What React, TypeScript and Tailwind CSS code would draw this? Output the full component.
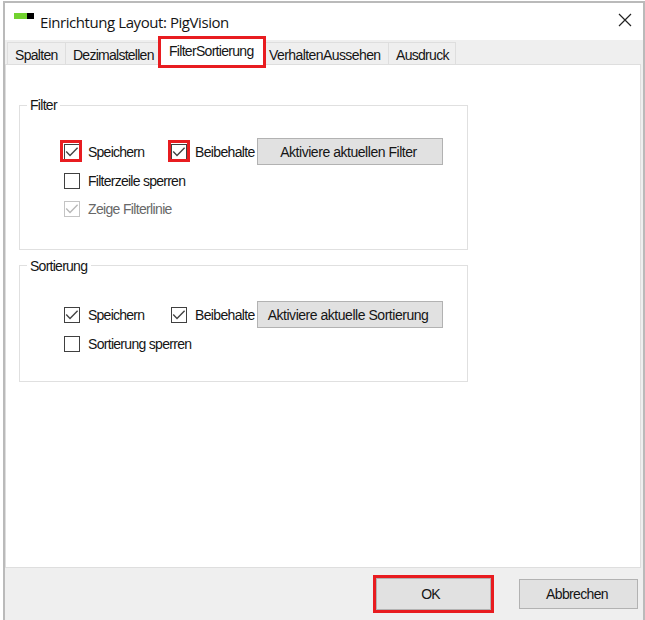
import type { ReactNode } from "react";

function Check({ checked = false, disabled = false, marked = false, markClass = "" }: { checked?: boolean; disabled?: boolean; marked?: boolean; markClass?: string }) {
  return (
    <span className={`relative block h-4 w-4 shrink-0 border ${disabled ? "border-[#c4c4c4] text-[#b8b8b8]" : "border-[#404040] text-[#444]"} bg-white`}>
      {checked && (
        <svg viewBox="0 0 14 14" className="h-[14px] w-[14px]" fill="none" stroke="currentColor" strokeWidth="1.4">
          <path d="M1.2 6.6 5 10.4 12.6 2.8" />
        </svg>
      )}
      {marked && <span className={`absolute h-[22px] w-[22px] border-[3px] border-[#e81c20] ${markClass}`} />}
    </span>
  );
}

function Button({ children, className }: { children: ReactNode; className: string }) {
  return <button className={`flex shrink-0 items-center justify-center border border-[#b2b2b2] bg-[#e1e1e1] ${className}`}>{children}</button>;
}

function Group({ title, titleClass, className, children }: { title: string; titleClass: string; className: string; children: ReactNode }) {
  return (
    <section className={`relative w-[449px] border border-[#e0e0e0] pl-11 ${className}`}>
      <h2 className={`absolute left-[7px] h-[17px] bg-white pl-[3px] leading-[17px] ${titleClass}`}>{title}</h2>
      {children}
    </section>
  );
}

export default function App() {
  return (
    <main className="h-[620px] w-[645px] overflow-hidden bg-white pt-px pl-[3px] font-['Liberation_Sans',Arial,sans-serif] text-[14px] leading-4 whitespace-nowrap text-[#151515]">
      <div className="flex h-[619px] w-[642px] flex-col border-t-2 border-r-2 border-l-2 border-[#bababa] bg-[#efefef]">
        <header className="flex h-[37px] shrink-0 items-center bg-white pl-[9px]">
          <span className="mb-[11px] flex h-[6px] w-5">
            <span className="w-[13px] bg-[#72d22f]" />
            <span className="w-[7px] bg-black" />
          </span>
          <span className="ml-[6px] font-['Open_Sans',sans-serif] text-[15px] tracking-[-0.43px]">Einrichtung Layout: PigVision</span>
          <svg viewBox="0 0 14 14" className="mr-[11px] mb-[3px] ml-auto h-[14px] w-[14px]" stroke="#222" strokeWidth="1.2">
            <path d="M1 1 13 13M13 1 1 13" />
          </svg>
        </header>
        <nav className="relative z-10 flex h-6 shrink-0 pt-[2px] pl-[2px]">
          <span className="w-[58px] border-t border-l border-[#dedede] pt-[4px] pl-[7px] tracking-[-0.7px]">Spalten</span>
          <span className="w-[93px] border-t border-l border-[#dedede] pt-[4px] pl-[7px] tracking-[-0.74px]">Dezimalstellen</span>
          <span className="-mt-[6px] h-[32px] w-[108px] shrink-0 border-[3px] border-[#e81c20] bg-white pt-[4px] pl-[8px] tracking-[-0.7px]">FilterSortierung</span>
          <span className="w-[122px] border-t border-[#dedede] pt-[4px] pl-[3px] tracking-[-0.58px]">VerhaltenAussehen</span>
          <span className="w-[68px] border-x border-t border-[#dedede] pt-[4px] pl-[7px] tracking-[-0.7px]">Ausdruck</span>
        </nav>
        <div className="h-[504px] w-[636px] shrink-0 border border-[#dedede] bg-white pt-[40px] pl-[13px]">
          <Group title="Filter" titleClass="-top-[9px] w-[33px] tracking-[-0.7px]" className="h-[145px]">
            <div className="mt-[32px] flex h-[27px] items-center">
              <Check checked marked markClass="-top-[5px] -left-[5px]" />
              <span className="ml-2 w-[83px] tracking-[-0.75px]">Speichern</span>
              <Check checked marked markClass="-top-[5px] -left-[4px]" />
              <span className="ml-2 w-[62px] tracking-[-0.65px]">Beibehalte</span>
              <Button className="h-[27px] w-[186px] pr-[3px] tracking-[-0.46px]">Aktiviere aktuellen Filter</Button>
            </div>
            <div className="mt-[7px] flex items-center gap-2"><Check /><span className="mt-px h-4 tracking-[-0.74px]">Filterzeile sperren</span></div>
            <div className="mt-[11px] flex items-center gap-2 text-[#686868]"><Check checked disabled /><span className="mt-px h-4 tracking-[-0.66px]">Zeige Filterlinie</span></div>
          </Group>
          <Group title="Sortierung" titleClass="-top-[8px] w-[64px] tracking-[-0.74px]" className="mt-[15px] h-[117px]">
            <div className="mt-[35px] flex h-[27px] items-center">
              <Check checked />
              <span className="ml-2 w-[83px] tracking-[-0.75px]">Speichern</span>
              <Check checked />
              <span className="ml-2 w-[62px] tracking-[-0.65px]">Beibehalte</span>
              <Button className="h-[27px] w-[186px] pr-[4px] tracking-[-0.47px]">Aktiviere aktuelle Sortierung</Button>
            </div>
            <div className="mt-[7px] flex items-center gap-2"><Check /><span className="mt-px h-4 tracking-[-0.7px]">Sortierung sperren</span></div>
          </Group>
        </div>
        <footer className="flex pt-[7px] pl-[368px]">
          <div className="h-[38px] w-[121px] border-[3px] border-[#e81c20]">
            <Button className="h-8 w-full pr-[6px] tracking-[-0.8px]">OK</Button>
          </div>
          <Button className="mt-[4px] ml-[25px] h-[30px] w-[119px] pr-[3px] tracking-[-0.66px]">Abbrechen</Button>
        </footer>
      </div>
    </main>
  );
}
